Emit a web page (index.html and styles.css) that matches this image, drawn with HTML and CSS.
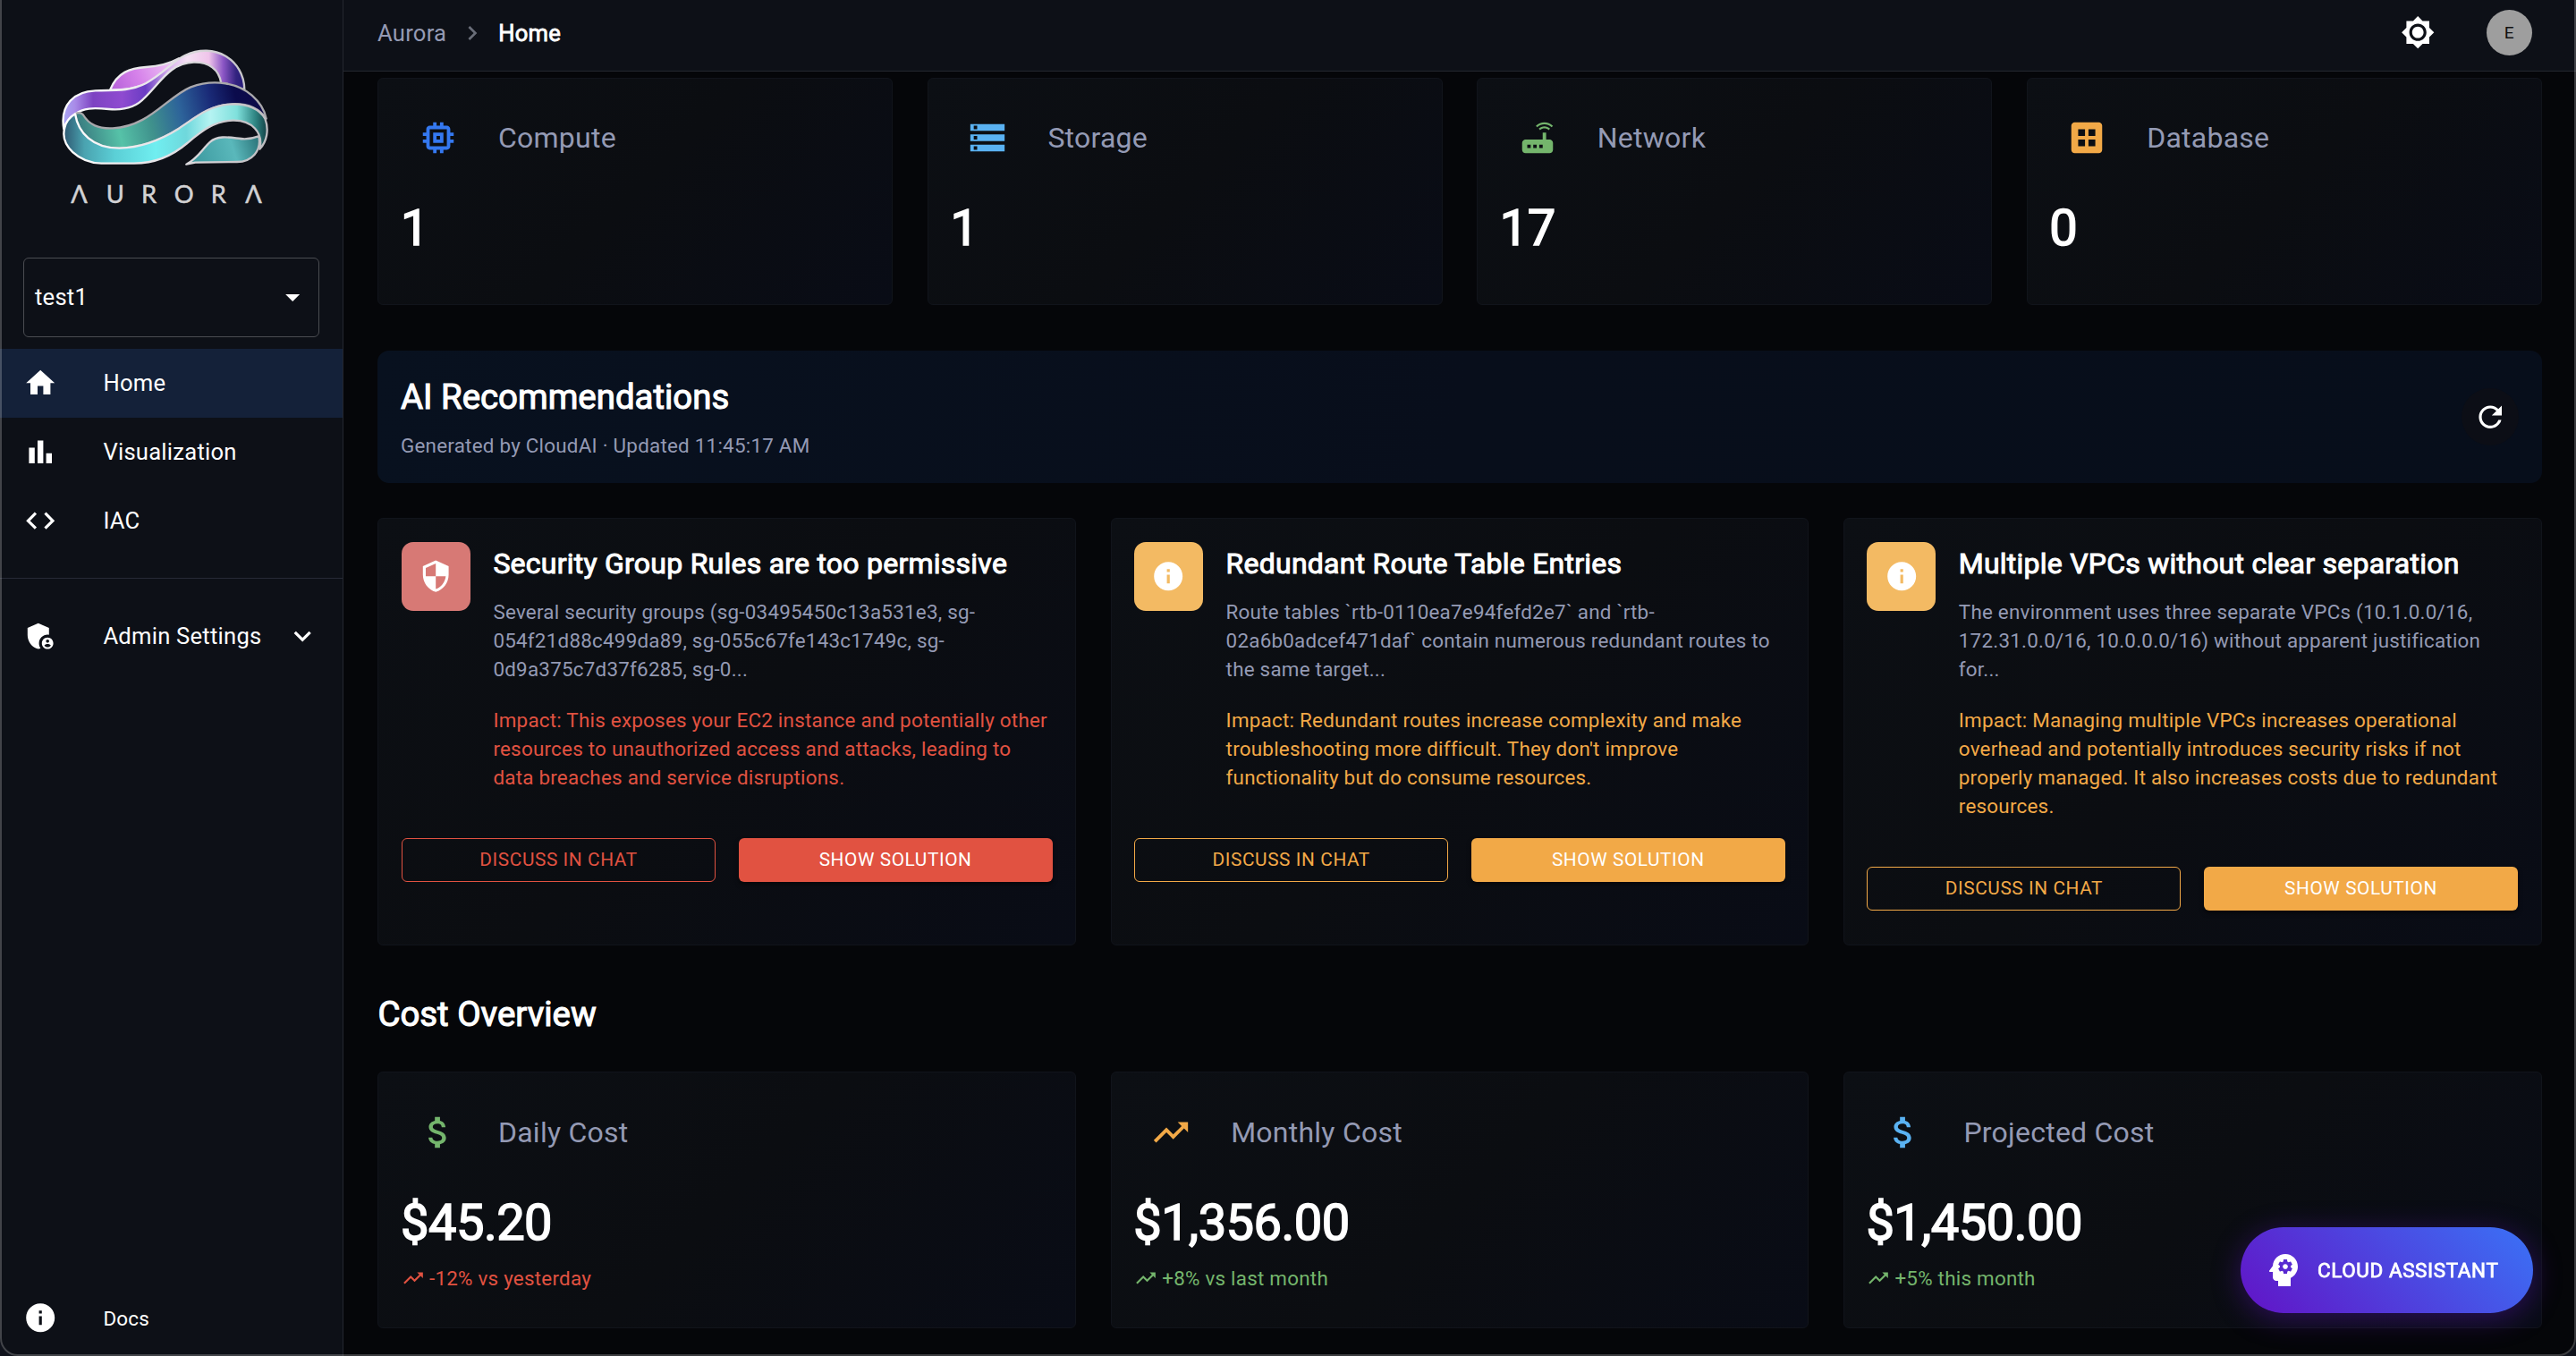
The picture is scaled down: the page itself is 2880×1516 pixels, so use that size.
FILE: index.html
```html
<!DOCTYPE html>
<html lang="en">
<head>
<meta charset="utf-8">
<title>Aurora - Home</title>
<link rel="stylesheet" href="styles.css">
</head>
<body>
<svg class="sprite" aria-hidden="true">
  <symbol id="i-home" viewBox="0 0 24 24"><path d="M10 20v-6h4v6h5v-8h3L12 3 2 12h3v8z"/></symbol>
  <symbol id="i-bars" viewBox="0 0 24 24"><path d="M4 9h4v11H4zm12 4h4v7h-4zm-6-9h4v16h-4z"/></symbol>
  <symbol id="i-code" viewBox="0 0 24 24"><path d="M9.4 16.6L4.8 12l4.6-4.6L8 6l-6 6 6 6 1.4-1.4zm5.2 0l4.6-4.6-4.6-4.6L16 6l6 6-6 6-1.4-1.4z"/></symbol>
  <symbol id="i-admin" viewBox="0 0 24 24"><path d="M17 11c.34 0 .67.04 1 .09V6.27L10.5 3 3 6.27v4.91c0 4.54 3.2 8.79 7.5 9.82.55-.13 1.08-.32 1.6-.55-.69-.98-1.1-2.17-1.1-3.45 0-3.31 2.69-6 6-6z"/><path d="M17 13c-2.21 0-4 1.79-4 4s1.79 4 4 4 4-1.79 4-4-1.79-4-4-4zm0 1.38c.62 0 1.12.51 1.12 1.12s-.51 1.12-1.12 1.12-1.12-.51-1.12-1.12.5-1.12 1.12-1.12zm0 5.37c-.93 0-1.74-.46-2.24-1.17.05-.72 1.51-1.08 2.24-1.08s2.19.36 2.24 1.08c-.5.71-1.31 1.17-2.24 1.17z"/></symbol>
  <symbol id="i-more" viewBox="0 0 24 24"><path d="M16.59 8.59L12 13.17 7.41 8.59 6 10l6 6 6-6z"/></symbol>
  <symbol id="i-info" viewBox="0 0 24 24"><path d="M12 2C6.48 2 2 6.48 2 12s4.48 10 10 10 10-4.48 10-10S17.52 2 12 2zm1 15h-2v-6h2v6zm0-8h-2V7h2v2z"/></symbol>
  <symbol id="i-drop" viewBox="0 0 24 24"><path d="M7 10l5 5 5-5z"/></symbol>
  <symbol id="i-next" viewBox="0 0 24 24"><path d="M10 6L8.59 7.41 13.17 12l-4.58 4.59L10 18l6-6z"/></symbol>
  <symbol id="i-sun" viewBox="0 0 24 24"><path d="M20 8.69V4h-4.69L12 .69 8.69 4H4v4.69L.69 12 4 15.31V20h4.69L12 23.31 15.31 20H20v-4.69L23.31 12 20 8.69zM12 18c-3.31 0-6-2.69-6-6s2.69-6 6-6 6 2.69 6 6-2.69 6-6 6zm0-10c-2.21 0-4 1.79-4 4s1.79 4 4 4 4-1.79 4-4-1.79-4-4-4z"/></symbol>
  <symbol id="i-memory" viewBox="0 0 24 24"><path d="M15 9H9v6h6V9zm-2 4h-2v-2h2v2zm8-2V9h-2V7c0-1.1-.9-2-2-2h-2V3h-2v2h-2V3H9v2H7c-1.1 0-2 .9-2 2v2H3v2h2v2H3v2h2v2c0 1.1.9 2 2 2h2v2h2v-2h2v2h2v-2h2c1.1 0 2-.9 2-2v-2h2v-2h-2v-2h2zm-4 6H7V7h10v10z"/></symbol>
  <symbol id="i-storage" viewBox="0 0 24 24"><path d="M2 20h20v-4H2v4zm2-3h2v2H4v-2zM2 4v4h20V4H2zm4 3H4V5h2v2zm-4 7h20v-4H2v4zm2-3h2v2H4v-2z"/></symbol>
  <symbol id="i-router" viewBox="0 0 24 24"><path d="M20.2 5.9l.8-.8C19.6 3.7 17.8 3 16 3s-3.6.7-5 2.1l.8.8C13 4.8 14.5 4.2 16 4.2s3 .6 4.2 1.7zm-.9.8c-.9-.9-2.1-1.4-3.3-1.4s-2.4.5-3.3 1.4l.8.8c.7-.7 1.6-1 2.5-1 .9 0 1.8.3 2.5 1l.8-.8zM19 13h-2V9h-2v4H5c-1.1 0-2 .9-2 2v4c0 1.1.9 2 2 2h14c1.1 0 2-.9 2-2v-4c0-1.1-.9-2-2-2zM8 18H6v-2h2v2zm3.5 0h-2v-2h2v2zm3.5 0h-2v-2h2v2z"/></symbol>
  <symbol id="i-dataset" viewBox="0 0 24 24"><path d="M19 3H5c-1.1 0-2 .9-2 2v14c0 1.1.9 2 2 2h14c1.1 0 2-.9 2-2V5c0-1.1-.9-2-2-2zm-8 14H7v-4h4v4zm0-6H7V7h4v4zm6 6h-4v-4h4v4zm0-6h-4V7h4v4z"/></symbol>
  <symbol id="i-money" viewBox="0 0 24 24"><path d="M11.8 10.9c-2.27-.59-3-1.2-3-2.15 0-1.09 1.01-1.85 2.7-1.85 1.78 0 2.44.85 2.5 2.1h2.21c-.07-1.72-1.12-3.3-3.21-3.81V3h-3v2.16c-1.94.42-3.5 1.68-3.5 3.61 0 2.31 1.91 3.46 4.7 4.13 2.5.6 3 1.48 3 2.41 0 .69-.49 1.79-2.7 1.79-2.06 0-2.87-.92-2.98-2.1h-2.2c.12 2.19 1.76 3.42 3.68 3.83V21h3v-2.15c1.95-.37 3.5-1.5 3.5-3.55 0-2.84-2.43-3.81-4.7-4.4z"/></symbol>
  <symbol id="i-trend" viewBox="0 0 24 24"><path d="M16 6l2.29 2.29-4.88 4.88-4-4L2 16.59 3.41 18l6-6 4 4 6.3-6.29L22 12V6z"/></symbol>
  <symbol id="i-refresh" viewBox="0 0 24 24"><path d="M17.65 6.35C16.2 4.9 14.21 4 12 4c-4.42 0-7.99 3.58-7.99 8s3.57 8 7.99 8c3.73 0 6.84-2.55 7.73-6h-2.08c-.82 2.33-3.04 4-5.65 4-3.31 0-6-2.69-6-6s2.69-6 6-6c1.66 0 3.14.69 4.22 1.78L13 11h7V4l-2.35 2.35z"/></symbol>
  <symbol id="i-shield" viewBox="0 0 24 24"><path d="M12 1L3 5v6c0 5.55 3.84 10.74 9 12 5.16-1.26 9-6.45 9-12V5l-9-4zm0 10.99h7c-.53 4.12-3.28 7.79-7 8.94V12H5V6.3l7-3.11v8.8z"/></symbol>
  <symbol id="i-mind" viewBox="0 0 24 24"><path d="M13 8.57c-.79 0-1.43.64-1.43 1.43s.64 1.43 1.43 1.43 1.43-.64 1.43-1.43-.64-1.43-1.43-1.43z"/><path d="M13 3C9.25 3 6.2 5.94 6.02 9.64L4.1 12.2c-.25.33-.01.8.4.8H6v3c0 1.1.9 2 2 2h1v3h7v-4.68c2.36-1.12 4-3.53 4-6.32 0-3.87-3.13-7-7-7zm3 7c0 .13-.01.26-.02.39l.83.66c.08.06.1.16.05.25l-.8 1.39c-.05.09-.16.12-.24.09l-.99-.4c-.21.16-.43.29-.67.39L14 13.83c-.01.1-.1.17-.2.17h-1.6c-.1 0-.18-.07-.2-.17l-.15-1.06c-.25-.1-.47-.23-.68-.39l-.99.4c-.09.03-.2 0-.25-.09l-.8-1.39c-.05-.08-.03-.19.05-.25l.84-.66c-.01-.13-.02-.26-.02-.39s.02-.27.04-.39l-.85-.66c-.08-.06-.1-.16-.05-.26l.8-1.38c.05-.09.15-.12.24-.09l1 .4c.2-.15.43-.29.67-.39L12 6.17c.02-.1.1-.17.2-.17h1.6c.1 0 .18.07.2.17l.15 1.06c.24.1.46.23.67.39l1-.4c.09-.03.2 0 .24.09l.8 1.38c.05.09.03.2-.05.26l-.85.66c.03.12.04.25.04.39z"/></symbol>
</svg>

<div class="app">
  <aside class="sidebar">
    <div class="brand">
      <svg class="logo" viewBox="192 150 720 600" role="img" aria-label="Aurora">
        <defs>
          <linearGradient id="g-arch" x1="215" y1="0" x2="822" y2="0" gradientUnits="userSpaceOnUse">
            <stop offset="0" stop-color="#a9a4f4"/><stop offset=".06" stop-color="#a98be8"/><stop offset=".16" stop-color="#7d43c2"/><stop offset=".32" stop-color="#8f4bd0"/><stop offset=".45" stop-color="#6a3cc4"/><stop offset=".58" stop-color="#d9b3ee"/><stop offset=".68" stop-color="#f5e1f4"/><stop offset=".8" stop-color="#efc4ea"/><stop offset=".88" stop-color="#8a55c4"/><stop offset=".95" stop-color="#33237f"/><stop offset="1" stop-color="#231a78"/>
          </linearGradient>
          <linearGradient id="g-leaf" x1="370" y1="300" x2="580" y2="205" gradientUnits="userSpaceOnUse">
            <stop offset="0" stop-color="#b45fd8"/><stop offset=".45" stop-color="#d682ea"/><stop offset="1" stop-color="#f0c8f6"/>
          </linearGradient>
          <linearGradient id="g-deep" x1="280" y1="470" x2="880" y2="330" gradientUnits="userSpaceOnUse">
            <stop offset="0" stop-color="#3b7f82"/><stop offset=".2" stop-color="#56c2a8"/><stop offset=".38" stop-color="#3f918c"/><stop offset=".55" stop-color="#2d639a"/><stop offset=".72" stop-color="#1a2b78"/><stop offset=".86" stop-color="#0b0b4c"/><stop offset="1" stop-color="#0d0a48"/>
          </linearGradient>
          <linearGradient id="g-teal" x1="215" y1="0" x2="897" y2="0" gradientUnits="userSpaceOnUse">
            <stop offset="0" stop-color="#2f5a73"/><stop offset=".1" stop-color="#4aa3b0"/><stop offset=".25" stop-color="#5bcfd6"/><stop offset=".45" stop-color="#70eef0"/><stop offset=".6" stop-color="#6fd8dc"/><stop offset=".72" stop-color="#b5f3f2"/><stop offset=".85" stop-color="#7fe0dc"/><stop offset=".94" stop-color="#2f8583"/><stop offset="1" stop-color="#123f44"/>
          </linearGradient>
          <linearGradient id="g-tail" x1="650" y1="540" x2="870" y2="470" gradientUnits="userSpaceOnUse">
            <stop offset="0" stop-color="#3d9aa0"/><stop offset=".6" stop-color="#5ab8bb"/><stop offset="1" stop-color="#2b7479"/>
          </linearGradient>
          <linearGradient id="g-rim" x1="210" y1="0" x2="900" y2="0" gradientUnits="userSpaceOnUse">
            <stop offset="0" stop-color="#ffffff"/><stop offset=".5" stop-color="#e4e2e6"/><stop offset="1" stop-color="#bdbcc0"/>
          </linearGradient>
        </defs>
        <g stroke="url(#g-rim)" stroke-width="7" stroke-linejoin="round">
          <path fill="url(#g-leaf)" d="M370 300C393 244 435 228 490 225C540 222 575 210 600 196C570 236 540 262 495 280C455 297 420 302 370 302Z"/>
          <path fill="url(#g-arch)" d="M214 432C200 350 250 306 320 304C395 303 440 305 490 279C550 245 580 205 620 186C720 140 818 200 820 300L742 280C735 232 700 208 650 209C570 212 540 275 485 328C455 362 410 370 365 366C310 361 280 362 252 382C235 395 218 412 214 432Z"/>
          <path fill="url(#g-deep)" stroke="#a9a8ac" d="M252 382C265 375 272 378 278 384C300 420 330 432 378 430C500 425 560 325 640 292C720 262 800 280 845 320C876 347 888 372 893 398C870 365 830 347 780 349C700 352 655 395 600 431C530 475 470 495 400 497C310 497 262 445 252 382Z"/>
          <path fill="url(#g-teal)" d="M252 382C262 445 310 497 400 497C470 495 530 475 600 431C655 395 700 352 780 349C830 349 870 366 889 398C903 435 895 475 871 500C884 445 845 402 780 404C715 406 670 445 628 480C575 525 520 548 450 548L340 548C265 545 200 490 217 428C222 405 236 392 252 382Z"/>
          <path fill="url(#g-tail)" d="M625 551C665 530 678 500 705 476C735 448 790 466 820 466C845 466 860 460 868 457C878 505 845 543 795 543L655 545Z"/>
        </g>
        <text class="wordmark" x="238 356 474 584 707 823" y="680">ΛURORΛ</text>
      </svg>
    </div>
    <div class="select"><span>test1</span><svg class="icon"><use href="#i-drop"/></svg></div>
    <nav class="nav">
      <a class="nav-item active"><svg class="icon"><use href="#i-home"/></svg><span>Home</span></a>
      <a class="nav-item"><svg class="icon"><use href="#i-bars"/></svg><span>Visualization</span></a>
      <a class="nav-item"><svg class="icon"><use href="#i-code"/></svg><span>IAC</span></a>
    </nav>
    <nav class="nav admin">
      <a class="nav-item"><svg class="icon"><use href="#i-admin"/></svg><span>Admin Settings</span><svg class="icon chevron"><use href="#i-more"/></svg></a>
    </nav>
    <a class="nav-item docs"><svg class="icon"><use href="#i-info"/></svg><span>Docs</span></a>
  </aside>

  <div class="page">
    <header class="topbar">
      <div class="crumbs"><span>Aurora</span><svg class="icon"><use href="#i-next"/></svg><b>Home</b></div>
      <div class="tools"><svg class="icon"><use href="#i-sun"/></svg><div class="avatar">E</div></div>
    </header>

    <main class="content">
      <section class="grid four">
        <article class="card stat"><div class="head"><span class="glyph blue"><svg><use href="#i-memory"/></svg></span><h3>Compute</h3></div><div class="value">1</div></article>
        <article class="card stat"><div class="head"><span class="glyph sky"><svg><use href="#i-storage"/></svg></span><h3>Storage</h3></div><div class="value">1</div></article>
        <article class="card stat"><div class="head"><span class="glyph green"><svg><use href="#i-router"/></svg></span><h3>Network</h3></div><div class="value">17</div></article>
        <article class="card stat"><div class="head"><span class="glyph amber"><svg><use href="#i-dataset"/></svg></span><h3>Database</h3></div><div class="value">0</div></article>
      </section>

      <section class="banner">
        <div><h2>AI Recommendations</h2><p>Generated by CloudAI · Updated 11:45:17 AM</p></div>
        <button class="refresh" aria-label="Refresh"><svg class="icon"><use href="#i-refresh"/></svg></button>
      </section>

      <section class="grid three recs">
        <article class="card rec high">
          <div class="rec-body">
            <div class="badge"><svg class="icon"><use href="#i-shield"/></svg></div>
            <div class="rec-text">
              <h3>Security Group Rules are too permissive</h3>
              <p>Several security groups (sg-03495450c13a531e3, sg-<br>054f21d88c499da89, sg-055c67fe143c1749c, sg-<br>0d9a375c7d37f6285, sg-0...</p>
              <p class="impact">Impact: This exposes your EC2 instance and potentially other<br>resources to unauthorized access and attacks, leading to<br>data breaches and service disruptions.</p>
            </div>
          </div>
          <div class="actions"><button class="btn outline">DISCUSS IN CHAT</button><button class="btn solid">SHOW SOLUTION</button></div>
        </article>
        <article class="card rec medium">
          <div class="rec-body">
            <div class="badge"><svg class="icon"><use href="#i-info"/></svg></div>
            <div class="rec-text">
              <h3>Redundant Route Table Entries</h3>
              <p>Route tables `rtb-0110ea7e94fefd2e7` and `rtb-<br>02a6b0adcef471daf` contain numerous redundant routes to<br>the same target...</p>
              <p class="impact">Impact: Redundant routes increase complexity and make<br>troubleshooting more difficult. They don't improve<br>functionality but do consume resources.</p>
            </div>
          </div>
          <div class="actions"><button class="btn outline">DISCUSS IN CHAT</button><button class="btn solid">SHOW SOLUTION</button></div>
        </article>
        <article class="card rec medium">
          <div class="rec-body">
            <div class="badge"><svg class="icon"><use href="#i-info"/></svg></div>
            <div class="rec-text">
              <h3>Multiple VPCs without clear separation</h3>
              <p>The environment uses three separate VPCs (10.1.0.0/16,<br>172.31.0.0/16, 10.0.0.0/16) without apparent justification<br>for...</p>
              <p class="impact">Impact: Managing multiple VPCs increases operational<br>overhead and potentially introduces security risks if not<br>properly managed. It also increases costs due to redundant<br>resources.</p>
            </div>
          </div>
          <div class="actions"><button class="btn outline">DISCUSS IN CHAT</button><button class="btn solid">SHOW SOLUTION</button></div>
        </article>
      </section>

      <h2 class="section-title">Cost Overview</h2>

      <section class="grid three">
        <article class="card stat"><div class="head"><span class="glyph green"><svg><use href="#i-money"/></svg></span><h3>Daily Cost</h3></div><div class="value">$45.20</div><div class="trend down"><svg><use href="#i-trend"/></svg><span>-12% vs yesterday</span></div></article>
        <article class="card stat"><div class="head"><span class="glyph amber"><svg><use href="#i-trend"/></svg></span><h3>Monthly Cost</h3></div><div class="value">$1,356.00</div><div class="trend up"><svg><use href="#i-trend"/></svg><span>+8% vs last month</span></div></article>
        <article class="card stat"><div class="head"><span class="glyph sky"><svg><use href="#i-money"/></svg></span><h3>Projected Cost</h3></div><div class="value">$1,450.00</div><div class="trend up"><svg><use href="#i-trend"/></svg><span>+5% this month</span></div></article>
      </section>
    </main>
  </div>
</div>

<button class="assistant"><svg><use href="#i-mind"/></svg><span>CLOUD ASSISTANT</span></button>
<div class="window-frame"></div>
</body>
</html>
```
FILE: styles.css
```css
/* 1rem = 10 layout pixels at the 1.6 display scale */
html {
  font-size: 16px;
}

*,
*::before,
*::after {
  box-sizing: border-box;
}

:root {
  --bg: #050609;
  --panel: #0d1017;
  --line: #24272f;
  --muted: #949ab4;
  --red: #e15241;
  --amber: #f2a947;
  --green: #74b56c;
  --sky: #5ab2f2;
  --blue: #3478f0;
}

body {
  margin: 0;
  height: 100vh;
  overflow: hidden;
  background: var(--bg);
  color: #fff;
  font-family: Roboto, "Liberation Sans", sans-serif;
  font-size: 1.6rem;
  letter-spacing: 0.00938em;
}

h2, h3, p {
  margin: 0;
  font-weight: 400;
}

button {
  font: inherit;
  color: inherit;
  border: 0;
  padding: 0;
  background: none;
}

svg {
  display: block;
  fill: currentColor;
  flex: none;
}

.sprite {
  display: none;
}

.icon {
  width: 2.4rem;
  height: 2.4rem;
}

.app {
  display: flex;
  height: 100vh;
}

/* Sidebar */
.sidebar {
  flex: none;
  width: 24rem;
  display: flex;
  flex-direction: column;
  background: var(--panel);
  border-right: 1px solid var(--line);
}

.brand {
  height: 288px;
  padding: 50px 0 0 64px;
}

.logo {
  width: 240px;
  height: 200px;
  overflow: visible;
}

.wordmark {
  font-family: Lato, sans-serif;
  font-size: 82px;
  font-weight: 400;
  letter-spacing: 0;
  fill: #d2d2d4;
  stroke: #d2d2d4;
  stroke-width: 1.5px;
}

.select {
  height: 89px;
  margin: 0 26px;
  padding: 0 10px 0 12px;
  display: flex;
  align-items: center;
  justify-content: space-between;
  border: 1px solid #4a4c51;
  border-radius: 6px;
}

.nav {
  padding: 13px 0 25px;
}

.nav-item {
  height: 77px;
  padding: 0 26px;
  display: flex;
  align-items: center;
}

.select span,
.nav-item span {
  padding-bottom: 2px;
}

.nav-item span {
  margin-left: 51px;
}

.nav-item.active {
  background: #142139;
}

.chevron {
  margin-left: auto;
}

.admin {
  border-top: 1px solid #272a36;
  padding: 26px 0;
}

.docs {
  margin-top: auto;
  margin-bottom: 4px;
  font-size: 1.4rem;
}

.docs span {
  padding-bottom: 0;
}

/* Top bar */
.page {
  flex: 1;
  min-width: 0;
  display: flex;
  flex-direction: column;
}

.topbar {
  flex: none;
  height: 80px;
  padding: 0 49px 6px 38px;
  display: flex;
  align-items: center;
  justify-content: space-between;
  background: var(--panel);
  border-bottom: 1px solid var(--line);
}

.crumbs {
  display: flex;
  align-items: center;
  font-size: 1.6rem;
  color: var(--muted);
}

.crumbs .icon {
  width: 2rem;
  height: 2rem;
  margin: 0 13px;
  color: #6a6e79;
}

.crumbs b {
  color: #fff;
  font-weight: 400;
  -webkit-text-stroke: 0.8px #fff;
}

.tools {
  display: flex;
  align-items: center;
  gap: 57px;
}

.avatar {
  width: 3.2rem;
  height: 3.2rem;
  border-radius: 50%;
  display: grid;
  place-items: center;
  background: #9e9e9e;
  color: #111;
  font-size: 1.2rem;
}

/* Content */
.content {
  padding: 7px 2.4rem 0;
}

.grid {
  display: grid;
  gap: 2.4rem;
}

.four {
  grid-template-columns: repeat(4, 1fr);
}

.three {
  grid-template-columns: repeat(3, 1fr);
}

.card {
  border: 1px solid #11141b;
  border-radius: 6px;
  background: linear-gradient(135deg, #0c0f14 0%, #0b0d11 50%, #090c16 100%);
}

.stat {
  height: 254px;
  padding: 25px 25.6px;
}

.grid.three .stat {
  height: 287px;
  padding-top: 26px;
}

.head {
  display: flex;
  align-items: center;
  height: 82px;
  gap: 26px;
}

.glyph {
  width: 82px;
  display: grid;
  place-items: center;
}

.glyph svg {
  width: 46px;
  height: 46px;
}

.blue { color: var(--blue); }
.sky { color: var(--sky); }
.green { color: var(--green); }
.amber { color: var(--amber); }

.head h3 {
  font-size: 2rem;
  letter-spacing: 0.0075em;
  color: var(--muted);
}

.value {
  margin: 27px 0 0 -1px;
  font-size: 3.5rem;
  line-height: 66px;
  letter-spacing: -0.009em;
  -webkit-text-stroke: 1.6px #fff;
}

.trend {
  display: flex;
  align-items: center;
  gap: 5px;
  margin-top: 13px;
  font-size: 1.4rem;
  line-height: 32px;
  letter-spacing: 0.01071em;
}

.trend svg {
  width: 26px;
  height: 26px;
}

.trend.down { color: var(--red); }
.trend.up { color: var(--green); }

.banner {
  margin-top: 51px;
  height: 148px;
  padding: 0 25.6px;
  display: flex;
  align-items: center;
  justify-content: space-between;
  border-radius: 13px;
  background: linear-gradient(100deg, #08111f 0%, #080e1b 50%, #070e1b 100%);
}

.banner h2,
.section-title {
  font-size: 2.4rem;
  line-height: 51px;
  letter-spacing: 0;
  -webkit-text-stroke: 1.1px #fff;
}

.banner p {
  margin-top: 13px;
  font-size: 1.4rem;
  line-height: 32px;
  letter-spacing: 0.01071em;
  color: var(--muted);
}

.refresh {
  width: 4rem;
  height: 4rem;
  border-radius: 50%;
  display: grid;
  place-items: center;
  background: #0c0e16;
}

.recs {
  margin-top: 39px;
}

.rec {
  --tone: var(--amber);
  --badge: #f3ba63;
  height: 478px;
  padding: 26px 25.6px;
}

.rec.high {
  --tone: var(--red);
  --badge: #d77975;
}

.rec-body {
  display: flex;
  gap: 1.6rem;
}

.badge {
  flex: none;
  width: 4.8rem;
  height: 4.8rem;
  border-radius: 13px;
  display: grid;
  place-items: center;
  background: var(--badge);
}

.rec-text {
  white-space: nowrap;
  font-size: 1.4rem;
  line-height: 32px;
  letter-spacing: 0.01071em;
}

.rec-text h3 {
  font-size: 2rem;
  line-height: 48px;
  letter-spacing: 0.0075em;
  margin-bottom: 14px;
  -webkit-text-stroke: 1px #fff;
}

.rec-text p {
  color: var(--muted);
}

.rec-text .impact {
  margin-top: 25px;
  color: var(--tone);
}

.actions {
  display: grid;
  grid-template-columns: 1fr 1fr;
  gap: 1.6rem;
  margin-top: 52px;
}

.btn {
  height: 49px;
  padding-bottom: 2px;
  border-radius: 6px;
  font-size: 1.3rem;
  letter-spacing: 0.02857em;
}

.outline {
  border: 1.5px solid var(--tone);
  color: var(--tone);
}

.solid {
  background: var(--tone);
  box-shadow: 0 3px 5px rgba(0, 0, 0, 0.5);
}

.section-title {
  margin: 51px 0 39px;
}

/* Floating button */
.assistant {
  position: fixed;
  right: 48px;
  bottom: 48px;
  height: 96px;
  width: 327px;
  padding: 0 0 0 24px;
  display: flex;
  align-items: center;
  gap: 14px;
  border-radius: 48px;
  background: linear-gradient(45deg, #6213c6 0%, #3a72f6 100%);
  box-shadow: 0 6px 32px rgba(98, 19, 198, 0.4);
  font-size: 1.4rem;
  letter-spacing: 0.02857em;
  white-space: nowrap;
  -webkit-text-stroke: 0.8px #fff;
}

.assistant span {
  padding-bottom: 1px;
}

.assistant svg {
  width: 48px;
  height: 48px;
  stroke: none;
}

.window-frame {
  position: fixed;
  inset: -20px 0 0 0;
  border: 2px solid rgba(255, 255, 255, 0.22);
  border-radius: 0 0 20px 20px;
  box-shadow: 0 0 0 30px #10131c;
  pointer-events: none;
}
```
